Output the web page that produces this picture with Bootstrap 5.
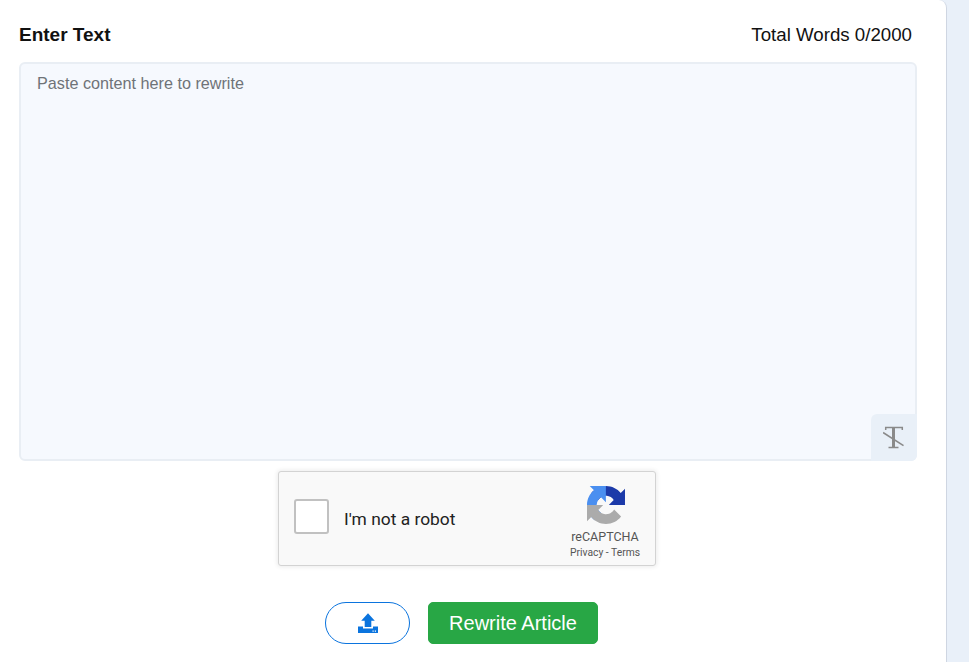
<!DOCTYPE html>
<html lang="en">
<head>
  <meta charset="UTF-8">
  <title>Rewrite Article</title>
  <link href="https://cdn.jsdelivr.net/npm/bootstrap@5.3.0/dist/css/bootstrap.min.css" rel="stylesheet">
  <style>
    html, body { height: 100%; overflow: hidden; }
    body { background: #e9f0f9; font-family: "Liberation Sans", Arial, sans-serif; color: #111; }
    .rw-panel { width: 947px; min-height: 662px; background: #fff; border-right: 1px solid #cfd6e2; border-top-right-radius: 8px; padding: 23px 29px 0 19px; }
    .rw-title { font-size: 19px; line-height: 24px; font-weight: 700; margin: 0; }
    .rw-count { font-size: 18.7px; line-height: 24px; padding-right: 5px; }
    .rw-head { height: 39px; }
    .rw-box { position: relative; height: 399px; }
    .rw-input { width: 100%; height: 100%; resize: none; background: #f6f9fe; border: 2px solid #e9eef4; border-radius: 6px; padding: 7px 16px; font-size: 16.2px; line-height: 24px; box-shadow: none; }
    .rw-input::placeholder { color: #6f7378; opacity: 1; }
    .rw-input:focus { background: #f6f9fe; border-color: #e9eef4; box-shadow: none; }
    .rw-clear { position: absolute; right: 0; bottom: 0; width: 46px; height: 47px; padding: 0; border: 0; background: #e9f0f8; border-radius: 6px 0 6px 0; }
    .rw-captcha { width: 378px; height: 95px; margin: 10px auto 0 259px; background: #f9f9f9; border: 1px solid #d3d3d3; border-radius: 3px; box-shadow: 0 0 4px 1px rgba(0,0,0,.08); font-family: Roboto, sans-serif; padding: 0 15px; }
    .rw-tick { padding-bottom: 4px; }
    .rw-check { width: 35px; height: 35px; background: #fff; border: 2px solid #c1c1c1; border-radius: 3px; }
    .rw-robot { font-size: 17.4px; color: #222; margin-left: 15px; margin-top: 5px; }
    .rw-brand { width: 70px; color: #555; text-align: center; margin-top: 14px; }
    .rw-brand svg { display: block; margin: 0 auto 4px; transform: translateX(1px); }
    .rw-name { font-size: 12.5px; line-height: 17px; margin-top: 4px; }
    .rw-links { font-size: 10.3px; line-height: 16px; white-space: nowrap; }
    .rw-actions { margin-top: 36px; margin-left: 306px; gap: 18px; }
    .rw-upload { width: 85px; height: 42px; padding: 0; background: #fff; border: 1px solid #0b74de; border-radius: 21px; }
    .rw-upload svg { display: block; margin: 0 auto; }
    .rw-submit { width: 170px; height: 42px; padding: 0; font-size: 20px; background: #28a745; border-color: #28a745; border-radius: 5px; }
  </style>
</head>
<body>
  <div class="rw-panel">
    <div class="rw-head d-flex justify-content-between align-items-start">
      <h5 class="rw-title">Enter Text</h5>
      <span class="rw-count">Total Words 0/2000</span>
    </div>

    <div class="rw-box">
      <textarea class="form-control rw-input" placeholder="Paste content here to rewrite"></textarea>
      <button type="button" class="rw-clear d-flex align-items-center justify-content-center" aria-label="Clear formatting">
        <svg width="22" height="24" viewBox="0 0 22 24" fill="none" stroke="#8a8a8a">
          <path d="M2.700 4V1.500H19.300V4" stroke-width="1.500"/>
          <path d="M10.500 1.500V21" stroke-width="3"/>
          <path d="M5.500 21.500H15.500" stroke-width="1.500"/>
          <path d="M0 6.500L20.500 19.700" stroke-width="1.600"/>
        </svg>
      </button>
    </div>

    <div class="rw-captcha d-flex justify-content-between align-items-start">
      <div class="rw-tick d-flex align-items-center h-100">
        <div class="rw-check"></div>
        <span class="rw-robot">I'm not a robot</span>
      </div>
      <div class="rw-brand">
        <svg width="38" height="38" viewBox="0 0 64 64">
          <path fill="#1c3aa9" d="M64 31.955l-.033-1.37V4.687l-7.16 7.16C50.948 4.674 42.033.093 32.050.093c-10.400 0-19.622 4.960-25.458 12.640l11.736 11.860a15.550 15.550 0 0 1 4.754-5.334c2.050-1.600 4.952-2.906 8.968-2.906.485 0 .860.057 1.135.163 4.976.393 9.288 3.140 11.828 7.124l-8.307 8.307c10.522-.040 22.410-.066 27.295.005"/>
          <path fill="#4a8ff0" d="M31.862.094l-1.370.033H4.594l7.160 7.160C4.580 13.147 0 22.060 0 32.046c0 10.400 4.960 19.622 12.640 25.458l11.860-11.736a15.550 15.550 0 0 1-5.334-4.754c-1.600-2.050-2.906-4.952-2.906-8.968 0-.485.057-.860.163-1.135.393-4.976 3.140-9.288 7.124-11.828l8.307 8.307c-.040-10.522-.066-22.410.005-27.295"/>
          <path fill="#ababab" d="M.001 32.045l.033 1.370v25.898l7.160-7.160c5.860 7.173 14.774 11.754 24.760 11.754 10.400 0 19.622-4.960 25.458-12.640l-11.736-11.860a15.550 15.550 0 0 1-4.754 5.334c-2.050 1.600-4.952 2.906-8.968 2.906-.485 0-.860-.057-1.135-.163-4.976-.393-9.288-3.140-11.828-7.124l8.307-8.307c-10.522.040-22.410.066-27.295-.005"/>
        </svg>
        <div class="rw-name">reCAPTCHA</div>
        <div class="rw-links">Privacy - Terms</div>
      </div>
    </div>

    <div class="rw-actions d-flex">
      <button type="button" class="btn rw-upload" aria-label="Upload file">
        <svg width="20" height="20" viewBox="0 0 20 20">
          <path fill="#0b74de" d="M0 13.500H5V15.500H15V13.500H20V20H0Z"/>
          <path fill="#0b74de" d="M10 .300L16.800 7.700H13.300V14H6.700V7.700H3.200Z"/>
          <path fill="#fff" d="M14.500 17.500h1.200v1.200h-1.200zM16.800 17.500h1.200v1.200h-1.200z"/>
        </svg>
      </button>
      <button type="button" class="btn btn-success rw-submit">Rewrite Article</button>
    </div>
  </div>

  <script src="https://cdn.jsdelivr.net/npm/bootstrap@5.3.0/dist/js/bootstrap.bundle.min.js"></script>
</body>
</html>
